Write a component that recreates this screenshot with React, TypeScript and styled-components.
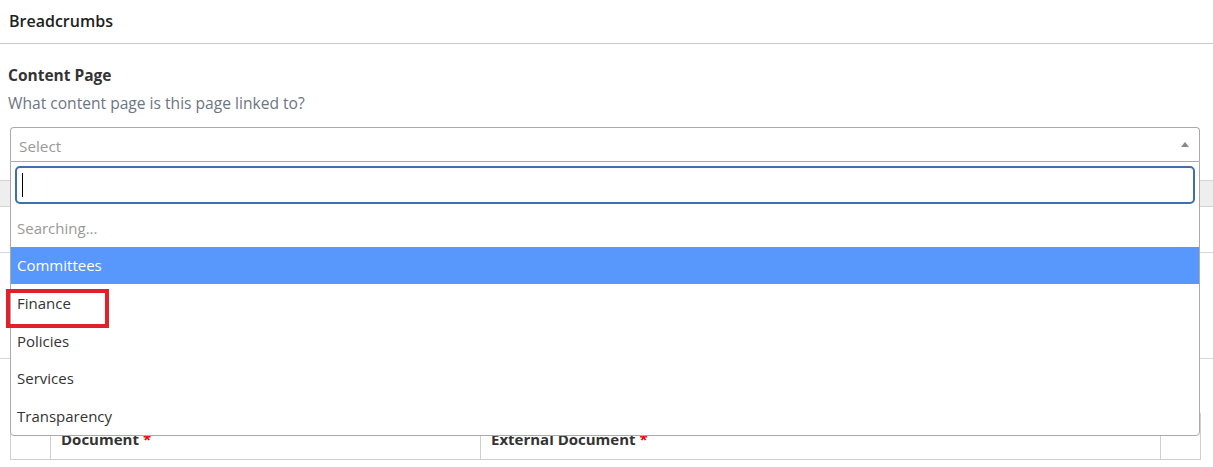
import React from "react";
import styled, { createGlobalStyle } from "styled-components";

const Global = createGlobalStyle`
  html, body { margin: 0; padding: 0; background: #fff; }
  body { font-family: "Open Sans", "Noto Sans", Arial, sans-serif; color: #212529; }
  * { box-sizing: border-box; }
`;

const Page = styled.div`
  width: 1213px;
  height: 467px;
  overflow: hidden;
  position: relative;
`;

const Header = styled.div`
  height: 44px;
  border-bottom: 1px solid #c8c8c8;
  display: flex;
  align-items: center;
  padding: 0 9px 2px;
  font-size: 16px;
  font-weight: 600;
  color: #1e1e1e;
`;

const Body = styled.div`
  padding: 21px 0 0;
`;

const Label = styled.div`
  padding: 0 8px;
  font-size: 15.5px;
  font-weight: 700;
  color: #333;
  line-height: 20px;
`;

const Help = styled.div`
  padding: 0 8px;
  margin-top: 8px;
  font-size: 15.6px;
  color: #6b7683;
  line-height: 20px;
`;

const SelectWrap = styled.div`
  position: relative;
  margin: 14px 13px 0 10px;
  z-index: 2;
`;

const SelectBox = styled.div`
  height: 34px;
  border: 1px solid #aaa;
  border-bottom: none;
  border-radius: 4px 4px 0 0;
  display: flex;
  align-items: center;
  justify-content: space-between;
  padding: 2px 10px 0 8px;
  font-size: 15.3px;
  color: #999;
`;

const Arrow = styled.span`
  width: 0;
  height: 0;
  border-left: 4px solid transparent;
  border-right: 4px solid transparent;
  border-bottom: 5px solid #888;
  margin-top: -3px;
`;

const Dropdown = styled.div`
  position: absolute;
  left: 0;
  right: 0;
  top: 100%;
  background: #fff;
  border: 1px solid #aaa;
  border-radius: 0 0 4px 4px;
`;

const SearchArea = styled.div`
  padding: 4px 4px 5px;
`;

const SearchField = styled.div`
  height: 38px;
  border: 2px solid #3f70a8;
  border-radius: 5px;
  display: flex;
  align-items: center;
  padding-left: 5px;
`;

const Caret = styled.span`
  width: 1px;
  height: 24px;
  background: #000;
`;

const Option = styled.div<{ $active?: boolean; $muted?: boolean }>`
  height: 37.6px;
  display: flex;
  align-items: center;
  padding: 0 6px;
  font-size: 15px;
  background: ${(p) => (p.$active ? "#5897fb" : "transparent")};
  color: ${(p) => (p.$active ? "#fff" : p.$muted ? "#999" : "#333")};
`;

const Highlight = styled.div`
  position: absolute;
  left: -5px;
  top: 127px;
  width: 103px;
  height: 39px;
  border: 4px solid #e3202a;
`;

const Under = styled.div`
  margin-top: 19px;
`;

const TabBar = styled.div`
  height: 27px;
  background: #eee;
  border-top: 1px solid #d4d4d4;
  border-bottom: 1px solid #d4d4d4;
`;

const Rule = styled.div<{ $gap: number }>`
  margin-top: ${(p) => p.$gap}px;
  border-top: 1px solid #d8d8d8;
`;

const Table = styled.div`
  margin: 54px 12px 0 10px;
  border: 1px solid #ccd0d5;
  display: grid;
  grid-template-columns: 40px 430px 680px 1fr;
  height: 47px;
`;

const Cell = styled.div<{ $last?: boolean }>`
  border-right: ${(p) => (p.$last ? "none" : "1px solid #ccd0d5")};
  display: flex;
  align-items: flex-end;
  padding: 0 10px 10px;
  font-size: 15px;
  font-weight: 700;
  color: #333;
`;

const Req = styled.span`
  color: #e00;
  margin-left: 4px;
`;

export default function App() {
  return (
    <Page>
      <Global />
      <Header>Breadcrumbs</Header>
      <Body>
        <Label>Content Page</Label>
        <Help>What content page is this page linked to?</Help>
        <SelectWrap>
          <SelectBox>
            <span>Select</span>
            <Arrow />
          </SelectBox>
          <Dropdown>
            <SearchArea>
              <SearchField>
                <Caret />
              </SearchField>
            </SearchArea>
            <Option $muted>Searching...</Option>
            <Option $active>Committees</Option>
            <Option>Finance</Option>
            <Option>Policies</Option>
            <Option>Services</Option>
            <Option>Transparency</Option>
            <Highlight />
          </Dropdown>
        </SelectWrap>
        <Under>
          <TabBar />
          <Rule $gap={45} />
          <Rule $gap={105} />
          <Table>
            <Cell />
            <Cell>
              Document<Req>*</Req>
            </Cell>
            <Cell>
              External Document<Req>*</Req>
            </Cell>
            <Cell $last />
          </Table>
        </Under>
      </Body>
    </Page>
  );
}
